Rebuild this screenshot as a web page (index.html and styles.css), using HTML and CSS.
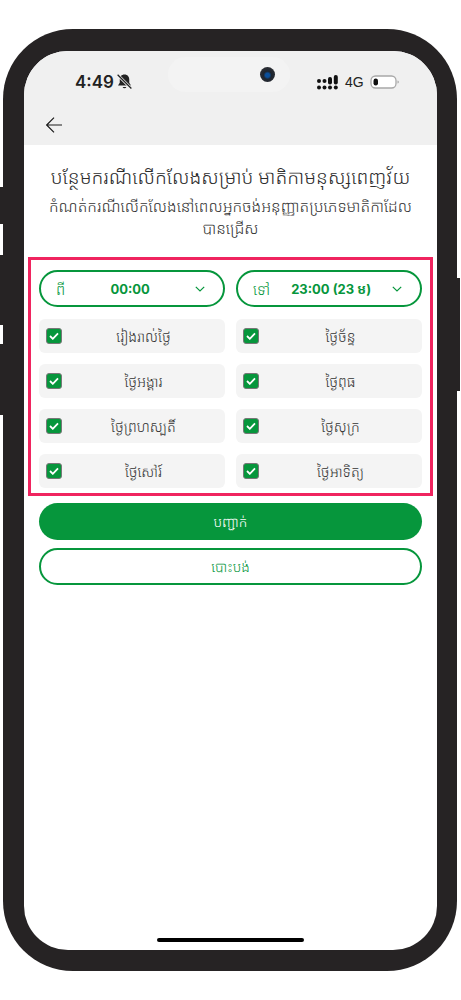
FILE: index.html
```html
<!DOCTYPE html>
<html lang="km">
<head>
<meta charset="utf-8">
<title>បន្ថែមករណីលើកលែង</title>
<link rel="stylesheet" href="styles.css">
</head>
<body>
<div class="phone">
  <span class="side side-l1"></span>
  <span class="side side-l2"></span>
  <span class="side side-l3"></span>
  <span class="side side-r1"></span>
  <div class="screen">
    <header class="top">
      <div class="status">
        <div class="status-left">
          <span class="time">4:49</span>
          <svg class="bell" viewBox="1 1 12 12.500" width="15" height="16"><path d="M7 1.2c-2.4 0-3.8 1.8-3.8 4v2.6L1.800 10h10.400l-1.400-2.200V5.200c0-2.200-1.400-4-3.800-4z" fill="#222"/><path d="M5.500 11.200a1.600 1.500 0 0 0 3 0z" fill="#222"/><path d="M1.500 1.500l11 11" stroke="#f0f0f0" stroke-width="2.200"/><path d="M1.500 1.500l11 11" stroke="#222" stroke-width="1"/></svg>
        </div>
        <div class="island"><span class="camera"></span></div>
        <div class="status-right">
          <svg class="signal" viewBox="0 0 21 15" width="21" height="15"><g fill="#111"><circle cx="2" cy="6" r="2"/><circle cx="2" cy="12.500" r="2"/><circle cx="7.500" cy="6" r="2"/><circle cx="7.500" cy="12.500" r="2"/><rect x="11" y="2" width="4" height="7.500" rx="1.900"/><circle cx="13" cy="12.500" r="2"/><rect x="16.800" y="0" width="4" height="9.500" rx="1.900"/><circle cx="18.800" cy="12.500" r="2"/></g></svg>
          <span class="net">4G</span>
          <svg class="battery" viewBox="0 0 30 14" width="30" height="14"><rect x="1" y="1" width="25" height="12" rx="4.500" fill="#fff" stroke="#a8a8a8" stroke-width="1.300"/><rect x="3.500" y="3.500" width="4.500" height="7" rx="2.200" fill="#111"/><path d="M27.500 5.500c1 .3 1.300 .8 1.300 1.500s-.3 1.200-1.300 1.500z" fill="#a8a8a8"/></svg>
        </div>
      </div>
      <div class="nav">
        <svg class="back" viewBox="0 0 16 16" width="16" height="16"><path d="M16 8H1M8 .7.700 8 8 15.300" fill="none" stroke="#1d1d1d" stroke-width="1.200"/></svg>
      </div>
    </header>
    <main class="content">
      <h1 class="title">បន្ថែមករណីលើកលែងសម្រាប់ មាតិកាមនុស្សពេញវ័យ</h1>
      <p class="sub">កំណត់ករណីលើកលែងនៅពេលអ្នកចង់អនុញ្ញាតប្រភេទមាតិកាដែល<br>បានជ្រើស</p>
      <section class="box">
        <div class="grid">
          <div class="select"><span class="sel-label">ពី</span><span class="sel-value">00:00</span><svg class="chev" viewBox="0 0 10 6" width="10" height="6"><path d="M.8.800 5 5 9.200.800" fill="none" stroke="#06963c" stroke-width="1.200"/></svg></div>
          <div class="select"><span class="sel-label">ទៅ</span><span class="sel-value">23:00 (23 ម)</span><svg class="chev" viewBox="0 0 10 6" width="10" height="6"><path d="M.8.800 5 5 9.200.800" fill="none" stroke="#06963c" stroke-width="1.200"/></svg></div>
        </div>
        <div class="grid days">
          <label class="day"><span class="check"><svg viewBox="0 0 10 8" width="10" height="8"><path d="M1 4l2.800 2.800L9 1.300" fill="none" stroke="#fff" stroke-width="1.800"/></svg></span><span class="day-name">រៀងរាល់ថ្ងៃ</span></label>
          <label class="day"><span class="check"><svg viewBox="0 0 10 8" width="10" height="8"><path d="M1 4l2.800 2.800L9 1.300" fill="none" stroke="#fff" stroke-width="1.800"/></svg></span><span class="day-name">ថ្ងៃច័ន្ទ</span></label>
          <label class="day"><span class="check"><svg viewBox="0 0 10 8" width="10" height="8"><path d="M1 4l2.800 2.800L9 1.300" fill="none" stroke="#fff" stroke-width="1.800"/></svg></span><span class="day-name">ថ្ងៃអង្គារ</span></label>
          <label class="day"><span class="check"><svg viewBox="0 0 10 8" width="10" height="8"><path d="M1 4l2.800 2.800L9 1.300" fill="none" stroke="#fff" stroke-width="1.800"/></svg></span><span class="day-name">ថ្ងៃពុធ</span></label>
          <label class="day"><span class="check"><svg viewBox="0 0 10 8" width="10" height="8"><path d="M1 4l2.800 2.800L9 1.300" fill="none" stroke="#fff" stroke-width="1.800"/></svg></span><span class="day-name">ថ្ងៃព្រហស្បតិ៍</span></label>
          <label class="day"><span class="check"><svg viewBox="0 0 10 8" width="10" height="8"><path d="M1 4l2.800 2.800L9 1.300" fill="none" stroke="#fff" stroke-width="1.800"/></svg></span><span class="day-name">ថ្ងៃសុក្រ</span></label>
          <label class="day"><span class="check"><svg viewBox="0 0 10 8" width="10" height="8"><path d="M1 4l2.800 2.800L9 1.300" fill="none" stroke="#fff" stroke-width="1.800"/></svg></span><span class="day-name">ថ្ងៃសៅរ៍</span></label>
          <label class="day"><span class="check"><svg viewBox="0 0 10 8" width="10" height="8"><path d="M1 4l2.800 2.800L9 1.300" fill="none" stroke="#fff" stroke-width="1.800"/></svg></span><span class="day-name">ថ្ងៃអាទិត្យ</span></label>
        </div>
      </section>
      <div class="actions">
        <button class="btn primary">បញ្ជាក់</button>
        <button class="btn outline">បោះបង់</button>
      </div>
    </main>
    <div class="home"></div>
  </div>
</div>
</body>
</html>
```
FILE: styles.css
```css
* { box-sizing: border-box; }
html, body { margin: 0; height: 1000px; background: #fff; overflow: hidden; }
body {
  padding: 29px 4px 29px 3px;
  font-family: "Noto Sans Khmer", "Khmer OS", "Noto Sans", "Inter", "Liberation Sans", sans-serif;
  color: #333;
}
.phone {
  position: relative;
  height: 942px;
  background: #262324;
  border-radius: 70px;
  padding: 22px 20px 21px 21px;
}
.side { position: absolute; background: #262324; width: 4px; }
.side-l1 { left: -3px; top: 158px; height: 37px; }
.side-l2 { left: -3px; top: 226px; height: 70px; }
.side-l3 { left: -3px; top: 315px; height: 71px; }
.side-r1 { right: -3px; top: 249px; height: 113px; }
.screen {
  position: relative;
  height: 100%;
  background: #fff;
  border-radius: 44px;
  overflow: hidden;
  display: flex;
  flex-direction: column;
}
.top { height: 94px; background: #f0f0f0; flex: none; }
.status {
  display: flex;
  align-items: flex-start;
  padding: 6px 0 0 51px;
  height: 50px;
}
.status-left { display: flex; align-items: center; gap: 3px; width: 93px; margin-top: 15px; }
.time { font: 600 17px/20px "Inter", sans-serif; color: #222; }
.island {
  width: 122px; height: 35px;
  background: #f3f3f3; border-radius: 18px;
  position: relative;
}
.camera {
  position: absolute; left: 92px; top: 10px;
  width: 15px; height: 15px; border-radius: 50%;
  background: radial-gradient(circle at 50% 55%, #0b4f9a 0 2px, #1d2530 4px, #2a2d33 7.500px);
}
.status-right { display: flex; align-items: center; gap: 7px; margin: 17px 0 0 27px; }
.net { font: 400 14px/16px "Liberation Sans", sans-serif; color: #222; margin-right: -1px; }
.nav { padding: 16px 0 0 22px; height: 44px; }
.back { display: block; }
.content { padding: 15px 15px 0; flex: 1; }
.title {
  margin: 0;
  font-size: 19.300px; font-weight: 300; line-height: 34px;
  text-align: center; color: #2c2c2c;
  white-space: nowrap;
}
.sub {
  margin: 1px 0 0;
  font-size: 15.700px; font-weight: 300; line-height: 22px;
  text-align: center; color: #333;
  white-space: nowrap;
}
.box {
  margin: 18px -11px 0;
  border: 3px solid #f0245f;
  padding: 10px 8px 5px;
}
.grid { display: grid; grid-template-columns: 186px 186px; gap: 11px; }
.select {
  height: 37px;
  border: 2px solid #06963c;
  border-radius: 19px;
  display: flex; align-items: center;
  padding: 0 18px 0 15px;
  color: #06963c;
}
.sel-label { font-size: 15px; font-weight: 300; flex: none; }
.sel-value { flex: 1; text-align: center; font: 700 13px/18px "Inter", "Noto Sans Khmer", sans-serif; white-space: nowrap; }
.chev { flex: none; }
.days { margin-top: 12px; }
.day {
  height: 34px; background: #f4f4f4; border-radius: 6px;
  display: flex; align-items: center; padding-left: 7px;
}
.check {
  width: 16px; height: 16px; flex: none;
  background: #06963c; border: 1px solid #777; border-radius: 3px;
  display: flex; align-items: center; justify-content: center;
}
.day-name { flex: 1; text-align: center; font-size: 14.300px; font-weight: 300; color: #333; }
.actions { display: flex; flex-direction: column; gap: 8px; margin-top: 7px; }
.btn {
  height: 37px; border-radius: 19px; width: 383px;
  font: 300 14px/20px "Noto Sans Khmer", "Noto Sans", sans-serif;
  padding: 0;
}
.primary { background: #06963c; color: #fff; border: none; }
.outline { background: #fff; color: #06963c; border: 2px solid #06963c; }
.home {
  position: absolute; left: 133px; right: 133px; bottom: 8px;
  height: 4px; border-radius: 2px; background: #000;
}
```
